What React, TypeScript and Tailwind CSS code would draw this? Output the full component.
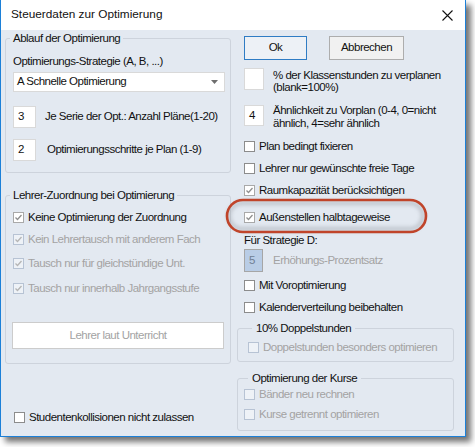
import React from "react";

const F = { fontFamily: '"Liberation Sans", Arial, sans-serif' };
const T = "text-[11.5px] tracking-[-0.5px] whitespace-nowrap";

function Check({ checked, disabled }: { checked?: boolean; disabled?: boolean }) {
  const border = disabled ? "border-[#b7c3d4]" : checked ? "border-[#a9a9a9]" : "border-[#8c8c8c]";
  const bg = disabled ? "bg-[#eef2f7]" : "bg-white";
  return (
    <div className={`w-[11px] h-[11px] border ${border} ${bg} flex items-center justify-center shrink-0`}>
      {checked && (
        <svg width="9" height="9" viewBox="0 0 9 9">
          <polyline points="1.5,4.5 3.5,6.5 7.5,2" fill="none" stroke={disabled ? "#b5b5b5" : "#8f8f8f"} strokeWidth="1.3" />
        </svg>
      )}
    </div>
  );
}

function CheckRow({ label, checked, disabled, className = "" }: { label: string; checked?: boolean; disabled?: boolean; className?: string }) {
  return (
    <div className={`flex items-center h-[16px] gap-[4px] shrink-0 ${className}`}>
      <Check checked={checked} disabled={disabled} />
      <span className={`${T} leading-[14px] ${disabled ? "text-[#a3a3a3]" : "text-[#111]"}`}>{label}</span>
    </div>
  );
}

export default function App() {
  return (
    <div className="relative w-[475px] h-[447px] bg-white overflow-hidden" style={F}>
      <div className="w-[466px] h-[437px] flex flex-col border-x border-b border-[#1c80d8] shadow-[5px_5px_6px_rgba(0,0,0,0.55)] bg-[#e3e9f1]">
        <div className="h-[30px] bg-white flex items-center justify-between pl-[10px] pr-[12px] shrink-0">
          <span className="text-[11.8px] text-[#111] whitespace-nowrap">Steuerdaten zur Optimierung</span>
          <svg width="11" height="11" viewBox="0 0 11 11">
            <path d="M0.5 0.5 L10.5 10.5 M10.5 0.5 L0.5 10.5" stroke="#111" strokeWidth="1.1" />
          </svg>
        </div>
        <div className="flex flex-1">
          {/* left column */}
          <div className="flex flex-col pl-[4px] w-[231px]">
            <fieldset className="mt-[1px] w-[226px] h-[142px] border border-[#cdd3dc] rounded-[3px] p-0 m-0 flex flex-col pl-[7px]">
              <legend className={`ml-[-3px] px-[3px] ${T} leading-[14px] text-[#111]`}>Ablauf der Optimierung</legend>
              <div className={`mt-[9px] ${T} leading-[14px] text-[#111]`}>Optimierungs-Strategie (A, B, ...)</div>
              <div className="mt-[4px] w-[212px] h-[20px] bg-white border border-[#d9d9d9] flex items-center justify-between pl-[3px] pr-[6px]">
                <span className={`${T} text-[#111]`}>A Schnelle Optimierung</span>
                <svg width="7" height="4" viewBox="0 0 7 4"><path d="M0 0 L7 0 L3.5 4 Z" fill="#6e6e6e" /></svg>
              </div>
              <div className="mt-[14px] flex items-center h-[22px]">
                <div className={`w-[23px] h-[22px] bg-white border border-[#d9d9d9] ${T} pl-[4px] flex items-center text-[#111] shrink-0`}>3</div>
                <span className={`ml-[9px] ${T} text-[#111]`}>Je Serie der Opt.: Anzahl Pläne(1-20)</span>
              </div>
              <div className="mt-[11px] flex items-center h-[22px]">
                <div className={`w-[23px] h-[22px] bg-white border border-[#d9d9d9] ${T} pl-[4px] flex items-center text-[#111] shrink-0`}>2</div>
                <span className={`ml-[11px] ${T} text-[#111]`}>Optimierungsschritte je Plan (1-9)</span>
              </div>
            </fieldset>
            <fieldset className="mt-[15px] w-[226px] h-[176px] border border-[#cdd3dc] rounded-[3px] p-0 m-0 flex flex-col pl-[7px]">
              <legend className={`ml-[-3px] px-[3px] ${T} leading-[14px] text-[#111]`}>Lehrer-Zuordnung bei Optimierung</legend>
              <CheckRow className="mt-[7px]" label="Keine Optimierung der Zuordnung" checked />
              <CheckRow className="mt-[6px]" label="Kein Lehrertausch mit anderem Fach" checked disabled />
              <CheckRow className="mt-[8px]" label="Tausch nur für gleichstündige Unt." checked disabled />
              <CheckRow className="mt-[9px]" label="Tausch nur innerhalb Jahrgangsstufe" checked disabled />
              <div className={`mt-[26px] ml-[-1px] w-[212px] h-[27px] bg-white border border-[#cccccc] flex items-center justify-center ${T} text-[#a3a3a3]`}>
                Lehrer laut Unterricht
              </div>
            </fieldset>
            <CheckRow className="mt-[45px] ml-[9px]" label="Studentenkollisionen nicht zulassen" />
          </div>
          {/* right column */}
          <div className="flex flex-col ml-[5px] w-[217px]">
            <div className="mt-[6px] ml-[7px] flex gap-[22px] h-[24px] shrink-0">
              <div className={`w-[63px] h-[24px] border border-[#2f7cc4] bg-[#edf1f6] flex items-center justify-center ${T} text-[#111]`}>Ok</div>
              <div className={`w-[75px] h-[24px] border border-[#adadad] bg-[#f1f1f1] flex items-center justify-center ${T} text-[#111]`}>Abbrechen</div>
            </div>
            <div className="mt-[8px] ml-[7px] flex items-start h-[22px] shrink-0">
              <div className="w-[20px] h-[22px] bg-white border border-[#d9d9d9] shrink-0" />
              <div className={`ml-[9px] mt-[1px] ${T} leading-[12px] text-[#111]`}>
                % der Klassenstunden zu verplanen<br />(blank=100%)
              </div>
            </div>
            <div className="mt-[15px] ml-[7px] flex items-start h-[21px] shrink-0">
              <div className={`w-[20px] h-[21px] bg-white border border-[#d9d9d9] shrink-0 ${T} pl-[4px] flex items-center text-[#111]`}>4</div>
              <div className={`ml-[9px] -mt-[1px] ${T} leading-[12.5px] text-[#111]`}>
                Ähnlichkeit zu Vorplan (0-4, 0=nicht<br />ähnlich, 4=sehr ähnlich
              </div>
            </div>
            <CheckRow className="mt-[12px] ml-[7px]" label="Plan bedingt fixieren" />
            <CheckRow className="mt-[6px] ml-[7px]" label="Lehrer nur gewünschte freie Tage" />
            <CheckRow className="mt-[6px] ml-[7px]" label="Raumkapazität berücksichtigen" checked />
            <CheckRow className="mt-[11px] ml-[7px]" label="Außenstellen halbtageweise" checked />
            <div className={`mt-[8px] ml-[7px] ${T} leading-[14px] text-[#111] shrink-0`}>Für Strategie D:</div>
            <div className="mt-[2px] ml-[7px] flex items-center h-[23px] shrink-0">
              <div className={`w-[19px] h-[23px] bg-[#b9cde6] border border-[#a6a6a6] shrink-0 ${T} pl-[4px] flex items-center text-[#6f7f94]`}>5</div>
              <span className={`ml-[10px] ${T} text-[#a3a3a3]`}>Erhöhungs-Prozentsatz</span>
            </div>
            <CheckRow className="mt-[5px] ml-[7px]" label="Mit Voroptimierung" />
            <CheckRow className="mt-[6px] ml-[7px]" label="Kalenderverteilung beibehalten" />
            <fieldset className="mt-[6px] w-[217px] h-[41px] border border-[#cdd3dc] rounded-[3px] p-0 m-0 flex flex-col pl-[10px] shrink-0">
              <legend className={`ml-[4px] px-[4px] ${T} leading-[14px] text-[#111]`}>10% Doppelstunden</legend>
              <CheckRow className="mt-[4px]" label="Doppelstunden besonders optimieren" disabled />
            </fieldset>
            <fieldset className="mt-[9px] w-[217px] h-[60px] border border-[#cdd3dc] rounded-[3px] p-0 m-0 flex flex-col pl-[6px] shrink-0">
              <legend className={`ml-[4px] px-[4px] ${T} leading-[14px] text-[#111]`}>Optimierung der Kurse</legend>
              <CheckRow className="mt-[1px]" label="Bänder neu rechnen" disabled />
              <CheckRow className="mt-[4px]" label="Kurse getrennt optimieren" disabled />
            </fieldset>
          </div>
        </div>
      </div>
      <svg className="absolute left-[224px] top-[197px]" width="206" height="40" viewBox="0 0 206 40">
        <defs>
          <filter id="blur" x="-10%" y="-30%" width="120%" height="160%">
            <feGaussianBlur stdDeviation="2" />
          </filter>
        </defs>
        <rect x="5" y="6" width="194" height="26" rx="13" fill="none" stroke="#8a8f96" strokeWidth="3" opacity="0.55" filter="url(#blur)" />
        <rect x="3" y="3" width="199" height="32" rx="16" fill="none" stroke="#c0442a" strokeWidth="2.6" />
      </svg>
    </div>
  );
}
